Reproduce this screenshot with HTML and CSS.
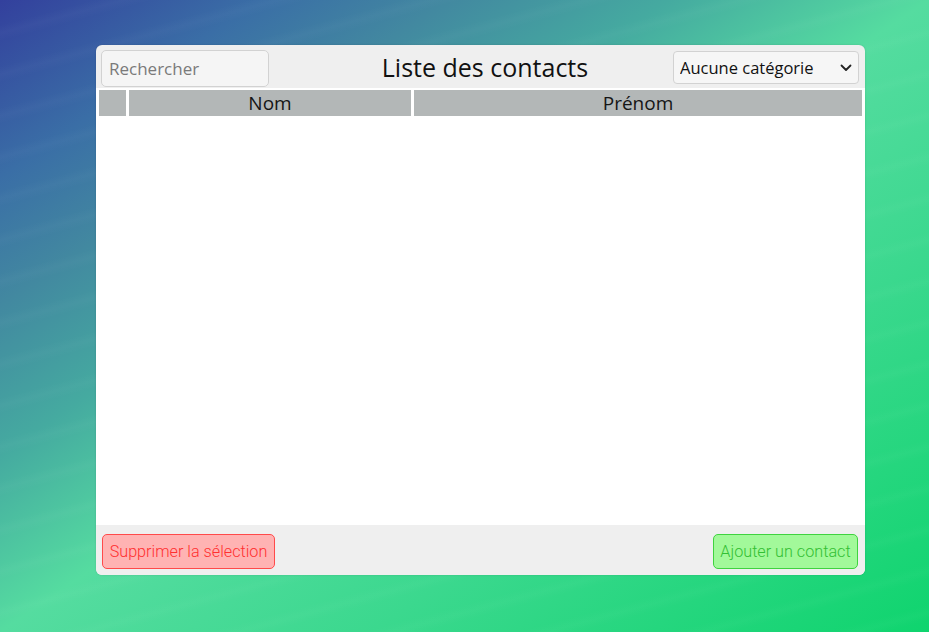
FILE: index.html
```html
<!DOCTYPE html>
<html lang="fr">
<head>
<meta charset="utf-8">
<title>Liste des contacts</title>
<link rel="stylesheet" href="styles.css">
</head>
<body>
<div class="stage">
  <div class="panel">
    <div class="topbar">
      <input class="search" type="text" placeholder="Rechercher">
      <h1 class="title">Liste des contacts</h1>
      <div class="select-wrap">
        <select class="select">
          <option>Aucune catégorie</option>
        </select>
        <svg class="chev" width="12" height="8" viewBox="0 0 12 8"><path d="M1.5 1.5 L6 6 L10.5 1.5" fill="none" stroke="#222" stroke-width="1.8" stroke-linecap="round" stroke-linejoin="round"/></svg>
      </div>
    </div>
    <div class="list">
      <table class="table">
        <thead>
          <tr>
            <th class="c-check"></th>
            <th class="c-nom">Nom</th>
            <th class="c-prenom">Prénom</th>
          </tr>
        </thead>
        <tbody></tbody>
      </table>
    </div>
    <div class="footer">
      <button class="btn btn-del">Supprimer la sélection</button>
      <button class="btn btn-add">Ajouter un contact</button>
    </div>
  </div>
</div>
</body>
</html>
```
FILE: styles.css
```css
html, body {
  margin: 0;
  padding: 0;
  height: 100%;
}
body {
  font-family: "Noto Sans", "Open Sans", sans-serif;
  background:
    repeating-linear-gradient(165deg, rgba(255,255,255,0) 0px, rgba(255,255,255,0) 24px, rgba(255,255,255,0.025) 32px, rgba(255,255,255,0) 40px),
    linear-gradient(to bottom right, #33409d 0%, #3a6ea6 14%, #4288a0 24%, #45aaa0 36%, #55dca0 50%, #3bd88e 70%, #0fd46e 100%);
  overflow: hidden;
}
.stage {
  padding: 45px 64px 57px 96px;
  height: 632px;
  box-sizing: border-box;
}
.panel {
  width: 769px;
  height: 530px;
  background: #efefef;
  border-radius: 6px;
  display: flex;
  flex-direction: column;
  overflow: hidden;
  box-shadow: 0 0 2px rgba(0,0,0,0.15);
}
.topbar {
  height: 43px;
  display: flex;
  align-items: flex-start;
  padding: 5px 6px 0 5px;
  box-sizing: border-box;
}
.search {
  width: 168px;
  height: 37px;
  box-sizing: border-box;
  border: 1px solid #d2d2d2;
  border-radius: 5px;
  background: #f5f5f5;
  font-family: "Open Sans", "Noto Sans", sans-serif;
  font-size: 17px;
  padding: 0 7px;
  color: #333;
  outline: none;
}
.search::placeholder {
  color: #7a7a7a;
}
.title {
  flex: 1;
  margin: 0;
  text-align: center;
  font-family: "Open Sans", "Noto Sans", sans-serif;
  font-weight: 400;
  font-size: 25px;
  line-height: 34px;
  color: #111;
  padding-left: 28px;
}
.select-wrap {
  position: relative;
  width: 186px;
  height: 33px;
  margin-top: 1px;
}
.select {
  appearance: none;
  -webkit-appearance: none;
  width: 100%;
  height: 100%;
  box-sizing: border-box;
  border: 1px solid #d2d2d2;
  border-radius: 4px;
  background: #f6f6f6;
  font-family: "Open Sans", "Noto Sans", sans-serif;
  font-size: 16.5px;
  color: #111;
  padding: 0 6px;
  outline: none;
}
.chev {
  position: absolute;
  right: 7px;
  top: 13px;
  pointer-events: none;
}
.list {
  flex: 1;
  background: #ffffff;
}
.table {
  width: 100%;
  border-spacing: 3px 2px;
  table-layout: fixed;
}
.table th {
  background: #b3b7b7;
  height: 26px;
  padding: 0;
  font-family: "Open Sans", "Noto Sans", sans-serif;
  font-weight: 400;
  font-size: 19px;
  color: #151515;
  line-height: 26px;
}
.c-check { width: 27px; }
.c-nom { width: 282px; }
.footer {
  height: 50px;
  display: flex;
  justify-content: space-between;
  align-items: flex-start;
  padding: 9px 7px 0 6px;
  box-sizing: border-box;
  background: #efefef;
}
.btn {
  height: 35px;
  border-radius: 5px;
  font-family: "Roboto", "Liberation Sans", sans-serif;
  font-weight: 300;
  font-size: 16.2px;
  padding: 0 6px;
  box-sizing: border-box;
}
.btn-del {
  width: 173px;
  background: #ffb3b3;
  border: 1.5px solid #ff4a4a;
  color: #ff3030;
}
.btn-add {
  width: 145px;
  background: #a2f99a;
  border: 1.5px solid #3fd33f;
  color: #33c033;
}
```
